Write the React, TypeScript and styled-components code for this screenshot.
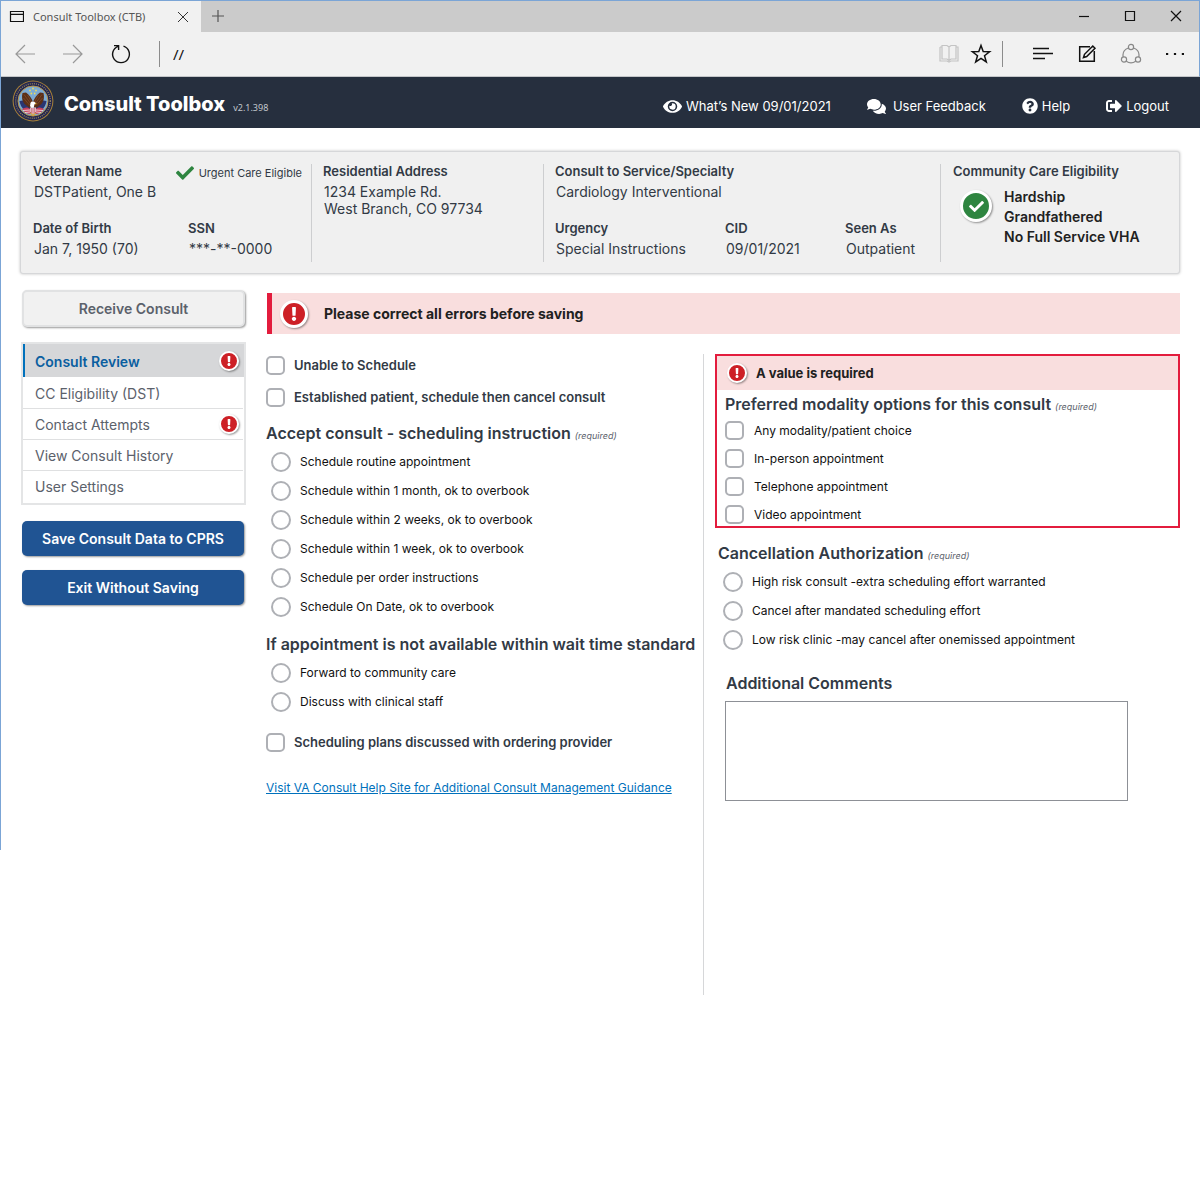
import React from "react";
import styled, { createGlobalStyle, css } from "styled-components";
import { FaCheck, FaComments, FaExclamation, FaEye, FaQuestionCircle, FaSignOutAlt } from "react-icons/fa";

const ink = "#323a45";
const red = "#cd2026";
const alertRed = "#e31c3d";
const alertPink = "#f9dede";
const navy = "#205493";
const frame = "#7ba5d6";

const GlobalStyle = createGlobalStyle`
  *, *::before, *::after { box-sizing: border-box; }
  body {
    margin: 0;
    background: #fff;
    color: ${ink};
    font-family: Inter, "Liberation Sans", sans-serif;
    font-size: 13px;
  }
  h1, h2, h3, p, dl, dt, dd, ul { margin: 0; padding: 0; }
  ul { list-style: none; }
  button, input, textarea { font: inherit; margin: 0; }
`;

const Window = styled.div`
  padding-left: 1px;
  background: linear-gradient(${frame}, ${frame}) no-repeat left top / 1px 850px;
`;

/* Browser chrome */
const TitleBar = styled.div`
  display: flex;
  height: 32px;
  background: #cbcbcb;
  border-top: 1px solid ${frame};
  border-right: 1px solid ${frame};
`;
const Tab = styled.div`
  display: flex;
  align-items: center;
  width: 200px;
  padding: 0 11px 0 8px;
  background: #f1f1f1;
  color: #555;
  font: 11px "Noto Sans", sans-serif;
`;
const TabTitle = styled.span`
  flex: 1;
  margin-left: 9px;
`;
const IconButton = styled.button<{ $w?: number }>`
  display: flex;
  align-items: center;
  justify-content: center;
  width: ${(p) => p.$w ?? 14}px;
  height: 30px;
  padding: 0;
  border: 0;
  background: none;
  svg { flex: none; }
`;
const WindowButtons = styled.div`
  display: flex;
  margin-left: auto;
`;
const Toolbar = styled.div`
  display: flex;
  align-items: center;
  height: 45px;
  padding-right: 2px;
  background: #f1f1f1;
  border-right: 1px solid ${frame};
  border-bottom: 1px solid #c4c6c9;
`;
const ToolSeparator = styled.span<{ $before: number; $after: number }>`
  width: 1px;
  height: 26px;
  margin: 0 ${(p) => p.$after}px 0 ${(p) => p.$before}px;
  background: #8c8c8c;
`;
const Address = styled.input`
  flex: 1;
  min-width: 0;
  padding: 0;
  border: 0;
  background: none;
  color: #111;
  font: 15px "Noto Sans", sans-serif;
`;

/* Application header */
const Header = styled.header`
  display: flex;
  align-items: center;
  height: 51px;
  padding: 0 31px 0 11px;
  background: #262f3e;
  color: #fff;
`;
const AppTitle = styled.h1`
  margin-left: 10px;
  padding-top: 2px;
  font-size: 20px;
  font-weight: 800;
  line-height: 24px;
`;
const Version = styled.span`
  margin: 10px 0 0 8px;
  color: #c3c7cd;
  font: 9px "Noto Sans", sans-serif;
`;
const HeaderLinks = styled.nav`
  display: flex;
  gap: 36px;
  margin-left: auto;
  padding-top: 7px;
`;
const HeaderLink = styled.a<{ $gap: number }>`
  display: flex;
  align-items: center;
  gap: ${(p) => p.$gap}px;
  color: #fff;
  font-size: 13px;
  line-height: 16px;
  text-decoration: none;
`;

/* Patient summary */
const Page = styled.div`
  padding: 23px 20px 0 19px;
`;
const Summary = styled.section`
  display: grid;
  grid-template-columns: 291fr 232fr 397fr 238fr;
  padding: 12px 0 11px;
  background: #f0f0f0;
  border: 1px solid #d6d7d9;
  border-radius: 3px;
  box-shadow: 0 0 3px rgba(0, 0, 0, 0.25);
`;
const SummarySection = styled.div`
  height: 98px;
  padding-left: 12px;
  border-right: 1px solid #cdced0;
  & + & { padding-left: 11px; }
  &:last-child { padding-left: 12px; border-right: 0; }
`;
const FieldRow = styled.dl<{ $columns: string }>`
  display: grid;
  grid-template-columns: ${(p) => p.$columns};
  height: 57px;
`;
const Term = styled.dt`
  font-size: 13px;
  font-weight: 600;
  line-height: 15px;
  white-space: nowrap;
`;
const Detail = styled.dd`
  padding: 4px 0 0 1px;
  font-size: 14px;
  line-height: 17px;
  white-space: nowrap;
`;
const Urgent = styled.div`
  display: flex;
  gap: 5px;
  align-items: center;
  height: 18px;
  padding-right: 9px;
  justify-content: flex-end;
  font-size: 11px;
  white-space: nowrap;
  svg { color: #2e8540; }
`;
const Eligibility = styled.div`
  display: flex;
  align-items: flex-start;
  gap: 12px;
  padding: 8px 0 0 7px;
  color: #212121;
  font-size: 14px;
  font-weight: 600;
  line-height: 20px;
  white-space: nowrap;
`;
const Badge = styled.span<{ $size: number; $color: string }>`
  display: flex;
  flex: none;
  align-items: center;
  justify-content: center;
  width: ${(p) => p.$size}px;
  height: ${(p) => p.$size}px;
  border: ${(p) => (p.$size > 24 ? 3 : 2)}px solid #fff;
  border-radius: 50%;
  background: ${(p) => p.$color};
  box-shadow: 1px 1px 2px rgba(0, 0, 0, 0.4);
  color: #fff;
  ${Eligibility} & { margin-top: 3px; }
`;

/* Body */
const Body = styled.div`
  display: grid;
  grid-template-columns: 226px 1fr;
  gap: 20px;
  padding-top: 16px;
`;
const Sidebar = styled.aside`
  display: flex;
  flex-direction: column;
  padding-left: 1px;
`;
const SideButton = styled.button<{ $quiet?: boolean }>`
  height: 35px;
  margin: 0 2px 14px 1px;
  padding: 0;
  border: 0;
  border-radius: 5px;
  background: ${navy};
  box-shadow: 1px 1px 2px rgba(0, 0, 0, 0.4);
  color: #fff;
  font-size: 14px;
  font-weight: 600;
  ${(p) => p.$quiet && css`
    height: 37px;
    margin-right: 1px;
    margin-bottom: 15px;
    border: 2px solid #e1e2e3;
    background: #f1f1f1;
    color: #5b616b;
  `}
`;
const SideNav = styled.ul`
  margin-bottom: 16px;
  padding-bottom: 2px;
  border: 2px solid #e4e5e6;
`;
const NavItem = styled.li`
  & + & {
    margin-right: 1px;
    border-top: 1px solid #dfe0e1;
  }
  &:nth-child(2) { border-top-color: transparent; }
`;
const NavLink = styled.a<{ $active?: boolean }>`
  display: flex;
  align-items: center;
  justify-content: space-between;
  height: 30px;
  padding: 0 4px 0 12px;
  color: #5b616b;
  font-size: 14px;
  text-decoration: none;
  ${(p) => p.$active && css`
    height: 33px;
    padding: 1px 5px 0 10px;
    border-left: 2px solid #0071bc;
    background: #d6d7d9;
    color: #0a5ea0;
    font-weight: 600;
  `}
`;
const Main = styled.main`
  padding-top: 3px;
`;
const Alert = styled.div`
  display: flex;
  align-items: center;
  gap: 16px;
  height: 41px;
  margin-left: 1px;
  padding-left: 8px;
  border-left: 5px solid ${alertRed};
  background: ${alertPink};
  color: #212121;
  font-size: 14px;
  font-weight: 700;
`;
const Columns = styled.div`
  display: grid;
  grid-template-columns: 437fr 477fr;
  padding-top: 20px;
`;
const RightColumn = styled.div`
  min-height: 641px;
  padding-left: 11px;
  border-left: 1px solid #d6d7d9;
`;
const Heading = styled.h2<{ $top?: number; $left?: number }>`
  padding-top: ${(p) => p.$top ?? 0}px;
  padding-left: ${(p) => p.$left ?? 0}px;
  font-size: 16px;
  font-weight: 600;
  line-height: 24px;
  white-space: nowrap;
`;
const Required = styled.em`
  color: #5b616b;
  font-size: 9px;
  font-weight: 400;
  line-height: 1;
`;
const Options = styled.div<{ $left?: number }>`
  padding: 2px 0 0 ${(p) => p.$left ?? 5}px;
`;
const Option = styled.label`
  display: flex;
  align-items: center;
  gap: 9px;
  height: 29px;
  color: #111;
  font-size: 12px;
`;
const CheckList = styled.div`
  display: grid;
  gap: 10px;
  padding: 5px 0 3px 8px;
  ${Option} { height: 18px; gap: 10px; }
`;
const CheckOption = styled.label<{ $top?: number }>`
  display: flex;
  align-items: center;
  gap: 9px;
  height: 22px;
  margin-top: ${(p) => p.$top ?? 0}px;
  font-size: 13px;
  font-weight: 600;
`;
const Radio = styled.input.attrs({ type: "radio" })`
  flex: none;
  appearance: none;
  width: 20px;
  height: 20px;
  border: 2px solid #aeb0b5;
  border-radius: 50%;
  background: #fff;
  &:checked { box-shadow: inset 0 0 0 3px #fff; background: ${navy}; }
`;
const Checkbox = styled.input.attrs({ type: "checkbox" })`
  flex: none;
  appearance: none;
  width: 19px;
  height: 19px;
  border: 2px solid #aeb0b5;
  border-radius: 5px;
  background: #fff;
  &:checked { box-shadow: inset 0 0 0 2px #fff; background: ${navy}; }
`;
const HelpLink = styled.a`
  display: inline-block;
  margin-top: 25px;
  color: #0071bc;
  font-size: 12px;
  line-height: 20px;
`;
const ErrorGroup = styled.section`
  border: 2px solid ${alertRed};
`;
const ErrorTitle = styled.p`
  display: flex;
  align-items: center;
  gap: 9px;
  height: 34px;
  padding-left: 10px;
  background: ${alertPink};
  color: #212121;
  font-size: 13px;
  font-weight: 700;
`;
const Comments = styled.textarea`
  display: block;
  width: 403px;
  max-width: 100%;
  height: 100px;
  margin: 6px 0 0 10px;
  border: 1px solid #8d9096;
  border-radius: 0;
  resize: none;
`;
const SealDrawing = styled.svg`
  flex: none;
  margin-bottom: 4px;
`;

const Stroke = ({ size = 20, color = "#111", children }: { size?: number; color?: string; children: React.ReactNode }) => (
  <svg width={size} height={size} viewBox={`0 0 ${size} ${size}`} fill="none" stroke={color} strokeWidth="1.2" aria-hidden="true">
    {children}
  </svg>
);

const Seal = () => (
  <SealDrawing width="42" height="42" viewBox="0 0 42 42" aria-hidden="true">
    <circle cx="21" cy="21" r="20.4" fill="#a98238" />
    <circle cx="21" cy="21" r="19.4" fill="#232650" />
    <circle cx="21" cy="21" r="17.3" fill="none" stroke="#8d7f5e" strokeWidth="1.4" strokeDasharray="1 1.1" />
    <circle cx="21" cy="21" r="15" fill="#7cabd3" stroke="#b8954a" strokeWidth="1" />
    <path d="M7.5 21l6-1 4 6 3.5 2 3.5-2 4-6 6 1a13.6 13.6 0 0 1-27 0Z" fill="#2a3672" />
    <path d="M10 29c3-2 6-2 8 0l1 5c-4 0-7-2-9-5Zm22 0c-3-2-6-2-8 0l-1 5c4 0 7-2 9-5Z" fill="#c9405a" />
    <path d="M11 30.5l7-.5M13 32.5l5-.5M31 30.5l-7-.5M29 32.5l-5-.5" stroke="#f4e9e8" strokeWidth=".8" />
    <path d="M21 22c-1.500-4-3.500-7-7-9.500L10.500 13c-1 4-.5 8 2 11l4.500 3.500 2.500.5 1.500-3 1.500 3 2.500-.5 4.500-3.500c2.500-3 3-7 2-11l-3.500-.5c-3.500 2.500-5.500 5.500-7 9.500Z" fill="#5b2f17" />
    <path d="M12 14.500l7 9.500M11.500 18l6 7M15.500 15l4 7M30 14.500l-7 9.500M30.500 18l-6 7M26.500 15l-4 7" stroke="#85502d" strokeWidth=".7" />
    <path d="M18.5 23c.8-1.700 3.500-2 4.700-.4l1 1-1.700.7-.8 3.200-2.200.5-1.500-2Z" fill="#fff" />
    <path d="M23 23l2 .8-2 .8Z" fill="#e5b93c" />
    <path d="M18 27.5h6v4l-3 3.500-3-3.500Z" fill="#e8dfe3" />
    <path d="M19.2 28v5M21 28v6.500M22.800 28v5" stroke="#c23a50" strokeWidth=".8" />
    <path d="M18.5 33l2.500 2.500 2.500-2.500" fill="none" stroke="#d8a63e" strokeWidth="1.2" />
    <g fill="#eedb5a">
      <circle cx="21" cy="8.5" r=".9" />
      <circle cx="18" cy="10.5" r=".9" />
      <circle cx="24" cy="10.5" r=".9" />
      <circle cx="19.3" cy="13.5" r=".9" />
      <circle cx="22.7" cy="13.5" r=".9" />
    </g>
  </SealDrawing>
);

const ErrorBadge = ({ size = 20 }: { size?: number }) => (
  <Badge $size={size} $color={red} role="img" aria-label="Error">
    <FaExclamation size={size > 24 ? 14 : 10} />
  </Badge>
);

const Field = ({ label, children }: { label: string; children: React.ReactNode }) => (
  <div>
    <Term>{label}</Term>
    <Detail>{children}</Detail>
  </div>
);

const RadioGroup = ({ name, items, left }: { name: string; items: string[]; left?: number }) => (
  <Options $left={left} role="radiogroup">
    {items.map((item) => (
      <Option key={item}>
        <Radio name={name} />
        {item}
      </Option>
    ))}
  </Options>
);

const navItems = [
  { label: "Consult Review", active: true, error: true },
  { label: "CC Eligibility (DST)" },
  { label: "Contact Attempts", error: true },
  { label: "View Consult History" },
  { label: "User Settings" },
];
const instructions = [
  "Schedule routine appointment",
  "Schedule within 1 month, ok to overbook",
  "Schedule within 2 weeks, ok to overbook",
  "Schedule within 1 week, ok to overbook",
  "Schedule per order instructions",
  "Schedule On Date, ok to overbook",
];
const modalities = ["Any modality/patient choice", "In-person appointment", "Telephone appointment", "Video appointment"];
const cancellations = [
  "High risk consult -extra scheduling effort warranted",
  "Cancel after mandated scheduling effort",
  "Low risk clinic -may cancel after onemissed appointment",
];

export default function App() {
  return (
    <Window>
      <GlobalStyle />
      <TitleBar>
        <Tab>
          <Stroke size={15}>
            <path d="M1.5 2.500h13v10h-13zM1.5 5.300h13" />
          </Stroke>
          <TabTitle>Consult Toolbox (CTB)</TabTitle>
          <IconButton aria-label="Close tab">
            <Stroke size={12} color="#333"><path d="M1 1l10 10M11 1L1 11" strokeWidth="1" /></Stroke>
          </IconButton>
        </Tab>
        <IconButton $w={34} aria-label="New tab">
          <Stroke size={12} color="#555"><path d="M6 0v12M0 6h12" /></Stroke>
        </IconButton>
        <WindowButtons>
          <IconButton $w={46} aria-label="Minimize">
            <Stroke size={12}><path d="M1 6.5h10" /></Stroke>
          </IconButton>
          <IconButton $w={46} aria-label="Maximize">
            <Stroke size={12}><path d="M1.5 1.5h9v9h-9z" /></Stroke>
          </IconButton>
          <IconButton $w={46} aria-label="Close">
            <Stroke size={12}><path d="M1 1l10 10M11 1L1 11" /></Stroke>
          </IconButton>
        </WindowButtons>
      </TitleBar>
      <Toolbar>
        <IconButton $w={48} aria-label="Back">
          <Stroke size={22} color="#999"><path d="M21 11H2M11 2l-9 9 9 9" /></Stroke>
        </IconButton>
        <IconButton $w={47} aria-label="Forward">
          <Stroke size={22} color="#999"><path d="M1 11h19M11 2l9 9-9 9" /></Stroke>
        </IconButton>
        <IconButton $w={49} aria-label="Refresh">
          <Stroke size={22}>
            <path d="M13.5 3.2a8.400 8.400 0 1 1-5.300.1M4 2.600h4.600V7" strokeWidth="1.4" />
          </Stroke>
        </IconButton>
        <ToolSeparator $before={14} $after={13} />
        <Address aria-label="Address" defaultValue="//" />
        <IconButton $w={32} aria-label="Reading view">
          <Stroke size={22} color="#c4c4c4">
            <path d="M2 4v14h7l2 1 2-1h7V4h-2M2 4h2M4 2.500h5l2 1.500 2-1.500h5V16h-5l-2 1.500L9 16H4zM11 4v14" />
          </Stroke>
        </IconButton>
        <IconButton $w={32} aria-label="Favorite">
          <Stroke size={22}>
            <path d="M11 2.500l2.200 6.100 6.400.2-5.100 3.900 1.800 6.200-5.300-3.600-5.300 3.600 1.800-6.200-5.100-3.900 6.400-.2z" strokeWidth="1.5" />
          </Stroke>
        </IconButton>
        <ToolSeparator $before={5} $after={18} />
        <IconButton $w={44} aria-label="Hub">
          <Stroke size={22}><path d="M1 5.500h16M1 10.500h20M1 15.500h12" strokeWidth="1.3" /></Stroke>
        </IconButton>
        <IconButton $w={44} aria-label="Web note">
          <Stroke size={22}>
            <path d="M14 3.700H3.700v14.600h14.600V8M7.500 14.500l1-3.200 8.300-8.300 2.200 2.200-8.300 8.300z" strokeWidth="1.5" />
          </Stroke>
        </IconButton>
        <IconButton $w={44} aria-label="Share">
          <Stroke size={22} color="#888">
            <circle cx="11" cy="4" r="2.6" />
            <circle cx="4" cy="16.5" r="2.6" />
            <circle cx="18" cy="16.5" r="2.6" />
            <path d="M8.4 5c-4 1.500-6 5-5.200 9M13.600 5c4 1.500 6 5 5.200 9M6.300 18.200c2.800 2 6.600 2 9.400 0" />
          </Stroke>
        </IconButton>
        <IconButton $w={44} aria-label="More">
          <Stroke size={22}>
            <path d="M2 11h2.200M9.900 11h2.200M17.800 11h2.200" strokeWidth="2.2" />
          </Stroke>
        </IconButton>
      </Toolbar>

      <Header>
        <Seal />
        <AppTitle>Consult Toolbox</AppTitle>
        <Version>v2.1.398</Version>
        <HeaderLinks>
          <HeaderLink href="#new" $gap={4}><FaEye size={19} />What’s New 09/01/2021</HeaderLink>
          <HeaderLink href="#feedback" $gap={7}><FaComments size={19} />User Feedback</HeaderLink>
          <HeaderLink href="#help" $gap={4}><FaQuestionCircle size={16} />Help</HeaderLink>
          <HeaderLink href="#logout" $gap={4}><FaSignOutAlt size={16} />Logout</HeaderLink>
        </HeaderLinks>
      </Header>

      <Page>
        <Summary>
          <SummarySection>
            <FieldRow $columns="155fr 123fr">
              <Field label="Veteran Name">DSTPatient, One B</Field>
              <Urgent><FaCheck size={18} />Urgent Care Eligible</Urgent>
            </FieldRow>
            <FieldRow $columns="155fr 123fr">
              <Field label="Date of Birth">Jan 7, 1950 (70)</Field>
              <Field label="SSN">***-**-0000</Field>
            </FieldRow>
          </SummarySection>
          <SummarySection>
            <FieldRow $columns="1fr">
              <Field label="Residential Address">1234 Example Rd.<br />West Branch, CO 97734</Field>
            </FieldRow>
          </SummarySection>
          <SummarySection>
            <FieldRow $columns="1fr">
              <Field label="Consult to Service/Specialty">Cardiology Interventional</Field>
            </FieldRow>
            <FieldRow $columns="170fr 120fr 95fr">
              <Field label="Urgency">Special Instructions</Field>
              <Field label="CID">09/01/2021</Field>
              <Field label="Seen As">Outpatient</Field>
            </FieldRow>
          </SummarySection>
          <SummarySection>
            <Term as="h2">Community Care Eligibility</Term>
            <Eligibility>
              <Badge $size={32} $color="#2e8540"><FaCheck size={15} /></Badge>
              <div>Hardship<br />Grandfathered<br />No Full Service VHA</div>
            </Eligibility>
          </SummarySection>
        </Summary>

        <Body>
          <Sidebar>
            <SideButton $quiet>Receive Consult</SideButton>
            <SideNav>
              {navItems.map((item) => (
                <NavItem key={item.label}>
                  <NavLink href="#section" $active={item.active}>
                    {item.label}
                    {item.error && <ErrorBadge />}
                  </NavLink>
                </NavItem>
              ))}
            </SideNav>
            <SideButton>Save Consult Data to CPRS</SideButton>
            <SideButton>Exit Without Saving</SideButton>
          </Sidebar>

          <Main>
            <Alert role="alert"><ErrorBadge size={28} />Please correct all errors before saving</Alert>
            <Columns>
              <div>
                <CheckOption><Checkbox />Unable to Schedule</CheckOption>
                <CheckOption $top={10}><Checkbox />Established patient, schedule then cancel consult</CheckOption>
                <Heading $top={13}>Accept consult - scheduling instruction <Required>(required)</Required></Heading>
                <RadioGroup name="instruction" items={instructions} />
                <Heading $top={11}>If appointment is not available within wait time standard</Heading>
                <RadioGroup name="unavailable" items={["Forward to community care", "Discuss with clinical staff"]} />
                <CheckOption $top={15}><Checkbox />Scheduling plans discussed with ordering provider</CheckOption>
                <HelpLink href="#help-site">Visit VA Consult Help Site for Additional Consult Management Guidance</HelpLink>
              </div>
              <RightColumn>
                <ErrorGroup>
                  <ErrorTitle><ErrorBadge />A value is required</ErrorTitle>
                  <Heading $top={2} $left={8}>Preferred modality options for this consult <Required>(required)</Required></Heading>
                  <CheckList>
                    {modalities.map((item) => (
                      <Option key={item}><Checkbox />{item}</Option>
                    ))}
                  </CheckList>
                </ErrorGroup>
                <Heading $top={13} $left={3}>Cancellation Authorization <Required>(required)</Required></Heading>
                <RadioGroup name="cancellation" items={cancellations} left={8} />
                <Heading $top={17} $left={11}><label htmlFor="comments">Additional Comments</label></Heading>
                <Comments id="comments" />
              </RightColumn>
            </Columns>
          </Main>
        </Body>
      </Page>
    </Window>
  );
}
